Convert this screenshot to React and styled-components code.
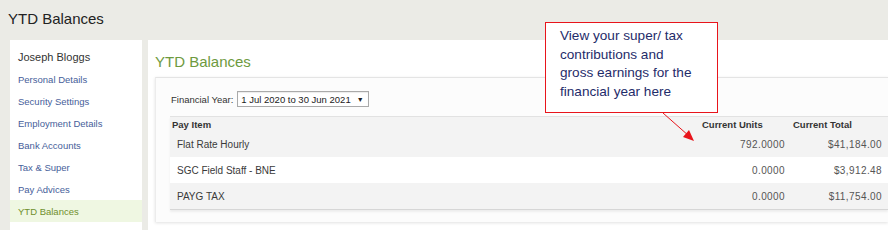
import React from 'react';
import styled, { createGlobalStyle } from 'styled-components';

const GlobalStyle = createGlobalStyle`
  html, body {
    margin: 0;
    padding: 0;
    background: #ffffff;
  }
  body {
    font-family: "Liberation Sans", Arial, sans-serif;
  }
`;

const Page = styled.div`
  position: relative;
  width: 888px;
  height: 230px;
  overflow: hidden;
  background: #ebebe6;
`;

const TopBar = styled.div`
  height: 40px;
  padding-left: 8px;
  display: flex;
  align-items: center;
  padding-bottom: 4px;
  box-sizing: border-box;
  font-size: 15px;
  color: #222;
`;

const Body = styled.div`
  display: flex;
  gap: 6px;
  padding-left: 10px;
  height: 190px;
`;

const Sidebar = styled.div`
  width: 132px;
  background: #fff;
  padding-top: 6px;
  display: flex;
  flex-direction: column;
`;

const SideItem = styled.div`
  height: 22px;
  display: flex;
  align-items: center;
  padding-left: 8px;
  font-size: ${p => (p.$name ? '11px' : '9.5px')};
  color: ${p => (p.$name ? '#333' : p.$active ? '#6f8f2c' : '#46609a')};
  background: ${p => (p.$active ? '#eff7e2' : 'transparent')};
`;

const Main = styled.div`
  flex: 1;
  background: #fff;
  padding: 12px 0 0 7px;
  display: flex;
  flex-direction: column;
`;

const MainTitle = styled.div`
  font-size: 15px;
  color: #6e9a3e;
  height: 25px;
  line-height: 20px;
`;

const Card = styled.div`
  background: #fcfcfc;
  border-top: 1px solid #e4e4e4;
  border-left: 1px solid #ececec;
  box-shadow: 0 1px 3px rgba(0, 0, 0, 0.12);
  padding: 12px 0 12px 14px;
`;

const YearRow = styled.div`
  display: flex;
  align-items: center;
  gap: 4px;
  font-size: 9.5px;
  color: #333;
  height: 18px;
  margin-bottom: 8px;
  padding-left: 1px;
`;

const Select = styled.div`
  display: flex;
  align-items: center;
  gap: 6px;
  border: 1px solid #aaa;
  background: #fff;
  height: 14px;
  padding: 0 4px 0 3px;
  font-size: 9.5px;
  color: #222;
  box-shadow: inset 0 1px 1px rgba(0, 0, 0, 0.08);
`;

const Caret = styled.span`
  font-size: 7px;
`;

const Table = styled.div`
  border-top: 1px solid #e2e2e2;
  border-bottom: 1px solid #d6d6d6;
  box-shadow: 0 2px 2px rgba(0, 0, 0, 0.06);
`;

const Row = styled.div`
  display: grid;
  grid-template-columns: 1fr 91px 97px;
  align-items: center;
  height: ${p => (p.$head ? '14px' : '26px')};
  background: ${p => (p.$alt ? '#f3f3f3' : '#fff')};
  font-size: ${p => (p.$head ? '9.5px' : '10px')};
  font-weight: ${p => (p.$head ? 'bold' : 'normal')};
  color: ${p => (p.$head ? '#333' : '#3a3a3a')};
`;

const Cell = styled.div`
  padding-left: ${p => (p.$num ? '0' : p.$head ? '2px' : '7px')};
  padding-right: ${p => (p.$num ? '6px' : '0')};
  text-align: ${p => (p.$num ? 'right' : 'left')};
  color: ${p => (p.$num ? '#555' : 'inherit')};
  letter-spacing: ${p => (p.$num ? '0.4px' : '0')};
  white-space: nowrap;
`;

const Callout = styled.div`
  position: absolute;
  left: 545px;
  top: 22px;
  width: 173px;
  height: 91px;
  box-sizing: border-box;
  border: 1px solid #e8141b;
  background: #fff;
  padding: 4px 4px 0 14px;
  font-size: 13.6px;
  line-height: 18.7px;
  color: #1f2c6a;
  white-space: nowrap;
`;

const Arrow = styled.svg`
  position: absolute;
  left: 655px;
  top: 110px;
  width: 50px;
  height: 40px;
  overflow: visible;
`;

const rows = [
  { item: 'Flat Rate Hourly', units: '792.0000', total: '$41,184.00' },
  { item: 'SGC Field Staff - BNE', units: '0.0000', total: '$3,912.48' },
  { item: 'PAYG TAX', units: '0.0000', total: '$11,754.00' },
];

const menu = [
  'Personal Details',
  'Security Settings',
  'Employment Details',
  'Bank Accounts',
  'Tax & Super',
  'Pay Advices',
  'YTD Balances',
];

export default function App() {
  return (
    <Page>
      <GlobalStyle />
      <TopBar>YTD Balances</TopBar>
      <Body>
        <Sidebar>
          <SideItem $name>Joseph Bloggs</SideItem>
          {menu.map(m => (
            <SideItem key={m} $active={m === 'YTD Balances'}>{m}</SideItem>
          ))}
        </Sidebar>
        <Main>
          <MainTitle>YTD Balances</MainTitle>
          <Card>
            <YearRow>
              Financial Year:
              <Select>
                1 Jul 2020 to 30 Jun 2021 <Caret>▼</Caret>
              </Select>
            </YearRow>
            <Table>
              <Row $head $alt>
                <Cell $head>Pay Item</Cell>
                <Cell $head>Current Units</Cell>
                <Cell $head>Current Total</Cell>
              </Row>
              {rows.map((r, i) => (
                <Row key={r.item} $alt={i % 2 === 0}>
                  <Cell>{r.item}</Cell>
                  <Cell $num>{r.units}</Cell>
                  <Cell $num>{r.total}</Cell>
                </Row>
              ))}
            </Table>
          </Card>
        </Main>
      </Body>
      <Callout>
        View your super/ tax<br />
        contributions and<br />
        gross earnings for the<br />
        financial year here
      </Callout>
      <Arrow viewBox="0 0 50 40">
        <line x1="8" y1="3" x2="34" y2="26" stroke="#e8141b" strokeWidth="1" />
        <polygon points="39,31 28,27 34,20" fill="#e8141b" />
      </Arrow>
    </Page>
  );
}
